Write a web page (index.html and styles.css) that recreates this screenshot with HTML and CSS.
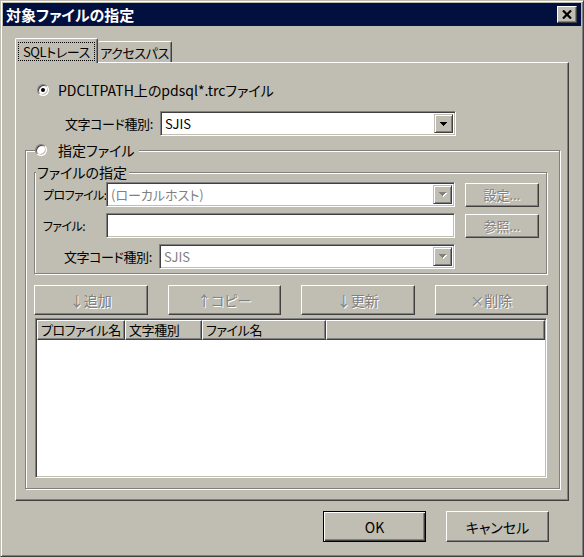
FILE: index.html
```html
<!DOCTYPE html>
<html lang="ja">
<head>
<meta charset="utf-8">
<title>対象ファイルの指定</title>
<link rel="stylesheet" href="styles.css">
</head>
<body>
<div class="window">
  <div class="titlebar">
    <span class="title">対象ファイルの指定</span>
    <span class="close"><svg width="10" height="9" viewBox="0 0 10 9"><path d="M1 0.5 L9 8.5 M9 0.5 L1 8.5" stroke="#000" stroke-width="2.2" fill="none"/></svg></span>
  </div>
  <div class="body">
    <div class="tabctl">
      <div class="tabstrip">
        <div class="tab active"><span class="focus">SQLトレース</span></div>
        <div class="tab second">アクセスパス</div>
      </div>
      <div class="panel">
        <div class="radio-row r1"><span class="radio checked"></span><span>PDCLTPATH上のpdsql*.trcファイル</span></div>
        <div class="row enc-row">
          <span class="lbl lbl-enc">文字コード種別:</span>
          <div class="field combo w-enc"><span class="val">SJIS</span><span class="drop"><svg width="7" height="4" viewBox="0 0 7 4"><rect x="0" y="0" width="7" height="1"/><rect x="1" y="1" width="5" height="1"/><rect x="2" y="2" width="3" height="1"/><rect x="3" y="3" width="1" height="1"/></svg></span></div>
        </div>
        <div class="group outer">
          <div class="gtitle radio-row r2"><span class="radio"></span><span>指定ファイル</span></div>
          <div class="group inner">
            <div class="gtitle itl">ファイルの指定</div>
            <div class="row prof-row">
              <span class="lbl lbl-short">プロファイル:</span>
              <div class="field combo w-long"><span class="val dis">(ローカルホスト)</span><span class="drop"><svg width="8" height="5" viewBox="0 0 8 5"><g fill="#fff"><rect x="1" y="1" width="7" height="1"/><rect x="2" y="2" width="5" height="1"/><rect x="3" y="3" width="3" height="1"/><rect x="4" y="4" width="1" height="1"/></g><g fill="#808080"><rect x="0" y="0" width="7" height="1"/><rect x="1" y="1" width="5" height="1"/><rect x="2" y="2" width="3" height="1"/><rect x="3" y="3" width="1" height="1"/></g></svg></span></div>
              <div class="btn small dis-text">設定...</div>
            </div>
            <div class="row file-row">
              <span class="lbl lbl-short">ファイル:</span>
              <div class="field w-long"></div>
              <div class="btn small dis-text">参照...</div>
            </div>
            <div class="row enc2-row">
              <span class="lbl lbl-enc">文字コード種別:</span>
              <div class="field combo w-enc"><span class="val dis">SJIS</span><span class="drop"><svg width="8" height="5" viewBox="0 0 8 5"><g fill="#fff"><rect x="1" y="1" width="7" height="1"/><rect x="2" y="2" width="5" height="1"/><rect x="3" y="3" width="3" height="1"/><rect x="4" y="4" width="1" height="1"/></g><g fill="#808080"><rect x="0" y="0" width="7" height="1"/><rect x="1" y="1" width="5" height="1"/><rect x="2" y="2" width="3" height="1"/><rect x="3" y="3" width="1" height="1"/></g></svg></span></div>
            </div>
          </div>
          <div class="btnrow">
            <div class="btn big dis-text">↓追加</div>
            <div class="btn big dis-text">↑コピー</div>
            <div class="btn big dis-text">↓更新</div>
            <div class="btn big dis-text">×削除</div>
          </div>
          <div class="list">
            <div class="lhead">
              <div class="hcell c1">プロファイル名</div>
              <div class="hcell c2">文字種別</div>
              <div class="hcell c3">ファイル名</div>
              <div class="hcell c4"></div>
            </div>
          </div>
        </div>
      </div>
    </div>
    <div class="footer">
      <div class="btn dlg default">OK</div>
      <div class="btn dlg">キャンセル</div>
    </div>
  </div>
</div>
</body>
</html>
```

FILE: styles.css
```css
* { box-sizing: border-box; }
html, body { margin: 0; padding: 0; }
body {
  width: 584px;
  height: 557px;
  overflow: hidden;
  background: #c0bdb2;
  font-family: "Noto Sans CJK JP", "Noto Sans", sans-serif;
  font-size: 14px;
  line-height: 16px;
  color: #000;
  font-feature-settings: "palt";
}

.window {
  width: 584px;
  height: 557px;
  background: #c0bdb2;
  border: 1px solid;
  border-color: #c0bdb2 #404040 #404040 #c0bdb2;
  box-shadow: inset 1px 1px #fff, inset -1px -1px #808080;
  padding: 2px;
  display: flex;
  flex-direction: column;
}

.titlebar {
  height: 23px;
  flex: none;
  background: #021040;
  display: flex;
  align-items: center;
  justify-content: space-between;
  padding: 0 4px 0 3px;
}
.title {
  color: #fff;
  font-weight: bold;
  font-size: 15px;
  line-height: 18px;
}
.close {
  width: 20px;
  height: 17px;
  background: #c0bdb2;
  border: 1px solid;
  border-color: #fff #404040 #404040 #fff;
  box-shadow: inset -1px -1px #808080;
  display: flex;
  align-items: center;
  justify-content: center;
}
.close svg { display: block; }

.body {
  flex: 1;
  padding: 12px 12px 0 12px;
}

.tabctl { width: 554px; }
.tabstrip {
  height: 24px;
  display: flex;
  align-items: flex-end;
}
.tab {
  background: #c0bdb2;
  border: 1px solid;
  border-bottom: none;
  border-color: #fff #404040 #fff #fff;
  box-shadow: inset -1px 0 #808080;
  border-radius: 2px 2px 0 0;
  display: flex;
  justify-content: center;
  white-space: nowrap;
  font-size: 13px;
  letter-spacing: -0.4px;
}
.tab.active {
  width: 83px;
  height: 25px;
  margin-bottom: -1px;
  position: relative;
  z-index: 1;
  padding: 3px 2px 0 2px;
}
.focus {
  display: block;
  width: 100%;
  height: 19px;
  border: 1px dotted #000;
  text-align: center;
  line-height: 17px;
}
.tab.second {
  width: 74px;
  height: 21px;
  border-left: none;
  line-height: 19px;
  padding-top: 1px;
}

.panel {
  height: 439px;
  border: 1px solid;
  border-color: #fff #404040 #404040 #fff;
  box-shadow: inset -1px -1px #808080;
  padding-left: 9px;
}

.radio-row {
  display: flex;
  align-items: center;
  height: 16px;
  white-space: nowrap;
}
.r1 { margin: 19px 0 0 12px; gap: 9px; }
.r2 { margin: -9px 0 0 9px; gap: 11px; padding-right: 5px; }

.radio {
  width: 12px;
  height: 12px;
  flex: none;
  border-radius: 50%;
  background: #fff;
  border: 1px solid;
  border-color: #808080 #fff #fff #808080;
  box-shadow: inset 1px 1px #404040, inset -1px -1px #c0bdb2;
  display: flex;
  align-items: center;
  justify-content: center;
}
.radio.checked::after {
  content: "";
  width: 4px;
  height: 4px;
  border-radius: 50%;
  background: #000;
}

.row {
  display: flex;
  align-items: center;
  height: 25px;
}
.enc-row { margin-top: 13px; padding-left: 40px; }
.lbl {
  flex: none;
  white-space: nowrap;
  font-size: 13px;
  letter-spacing: -0.4px;
}
.lbl-enc { width: 95px; }
.lbl-short { width: 63px; font-size: 12px; letter-spacing: -0.6px; }

.field {
  height: 25px;
  flex: none;
  background: #fff;
  border: 1px solid;
  border-color: #808080 #fff #fff #808080;
  box-shadow: inset 1px 1px #404040, inset -1px -1px #c0bdb2;
  padding: 2px;
}
.combo { display: flex; align-items: center; }
.w-enc { width: 296px; }
.w-long { width: 349px; }
.val { flex: 1; padding-left: 2px; white-space: nowrap; font-size: 13px; }
.val.dis { color: #808080; }
.drop {
  width: 19px;
  height: 100%;
  flex: none;
  background: #c0bdb2;
  border: 1px solid;
  border-color: #c0bdb2 #404040 #404040 #c0bdb2;
  box-shadow: inset 1px 1px #fff, inset -1px -1px #808080;
  display: flex;
  align-items: center;
  justify-content: center;
}
.drop svg { display: block; }

.group {
  border: 1px solid #808080;
  box-shadow: inset 1px 1px #fff, 1px 1px #fff;
}
.gtitle {
  background: #c0bdb2;
  width: fit-content;
  height: 16px;
  line-height: 16px;
}
.outer {
  width: 535px;
  margin-top: 14px;
  padding-bottom: 10px;
}
.inner {
  width: 513px;
  margin: 14px 0 0 8px;
  padding-bottom: 4px;
}
.itl { margin: -9px 0 0 1px; padding: 0 2px 0 1px; white-space: nowrap; }
.prof-row { margin-top: 2px; padding-left: 8px; }
.file-row { margin-top: 6px; padding-left: 8px; }
.enc2-row { margin-top: 6px; padding-left: 29px; }

.btn {
  flex: none;
  background: #c0bdb2;
  border: 1px solid;
  border-color: #fff #404040 #404040 #fff;
  box-shadow: inset -1px -1px #808080;
  display: flex;
  align-items: center;
  justify-content: center;
  white-space: nowrap;
}
.dis-text { color: #808080; text-shadow: 1px 1px 0 #fff; }
.btn.small { width: 74px; height: 24px; margin-left: 10px; font-size: 13px; }

.btnrow {
  display: flex;
  gap: 20px;
  width: 514px;
  margin: 11px 0 0 8px;
}
.btn.big { flex: 1; height: 30px; }

.list {
  width: 512px;
  height: 160px;
  margin: 3px 0 0 9px;
  background: #fff;
  border: 1px solid;
  border-color: #808080 #fff #fff #808080;
  box-shadow: inset 1px 1px #404040, inset -1px -1px #c0bdb2;
  padding: 1px;
}
.lhead {
  display: flex;
  height: 20px;
}
.hcell {
  height: 20px;
  background: #c0bdb2;
  border: 1px solid;
  border-color: #fff #404040 #404040 #fff;
  box-shadow: inset -1px -1px #808080;
  padding-left: 3px;
  line-height: 17px;
  white-space: nowrap;
  overflow: hidden;
  font-size: 13px;
  letter-spacing: -0.4px;
}
.c1 { width: 88px; }
.c2 { width: 77px; }
.c3 { width: 124px; }
.c4 { flex: 1; }

.footer {
  display: flex;
  justify-content: flex-end;
  gap: 20px;
  padding-right: 20px;
  margin-top: 10px;
}
.btn.dlg { width: 103px; height: 31px; }
.btn.default {
  border: 1px solid #000;
  box-shadow: inset 1px 1px #fff, inset -1px -1px #404040, inset -2px -2px #808080;
}
```
